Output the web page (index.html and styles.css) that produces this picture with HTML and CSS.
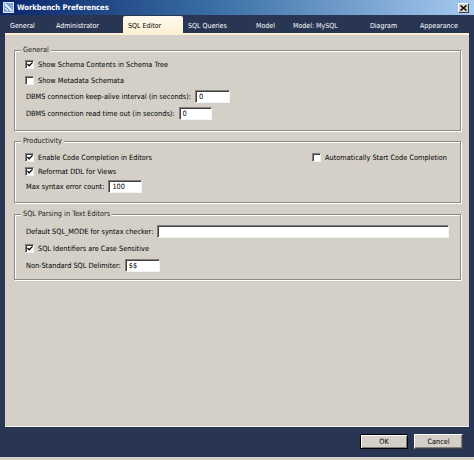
FILE: index.html
```html
<!DOCTYPE html>
<html>
<head>
<meta charset="utf-8">
<title>Workbench Preferences</title>
<link rel="stylesheet" href="styles.css">
</head>
<body>
<div class="window">
  <div class="titlebar">
    <svg class="appicon" width="11" height="11" viewBox="0 0 11 11">
      <rect x="0" y="0" width="11" height="11" fill="#7ea6d8"/>
      <rect x="0.5" y="0.5" width="10" height="10" fill="none" stroke="#d8e6f6"/>
      <path d="M2 2 L9 9" stroke="#ffffff" stroke-width="1.6"/>
      <path d="M2 6 L5 9" stroke="#ffffff" stroke-width="1"/>
    </svg>
    <span class="title">Workbench Preferences</span>
    <span class="closebtn">
      <svg width="7" height="6" viewBox="0 0 7 6"><path d="M0.5 0.5 L6.5 5.5 M6.5 0.5 L0.5 5.5" stroke="#000" stroke-width="1.4"/></svg>
    </span>
  </div>
  <div class="tabs">
    <span class="tab">General</span>
    <span class="tab">Administrator</span>
    <span class="tab active">SQL Editor</span>
    <span class="tab">SQL Queries</span>
    <span class="tab">Model</span>
    <span class="tab">Model: MySQL</span>
    <span class="tab">Diagram</span>
    <span class="tab">Appearance</span>
  </div>
  <div class="panel">
    <fieldset class="group g-general">
      <legend>General</legend>
      <div class="row cbrow"><span class="cb checked"><svg width="7" height="7" viewBox="0 0 7 7"><path d="M0.5 3 L2.5 5 L6.5 1" fill="none" stroke="#000" stroke-width="1.5"/></svg></span><span>Show Schema Contents in Schema Tree</span></div>
      <div class="row cbrow"><span class="cb"></span><span>Show Metadata Schemata</span></div>
      <div class="row inrow"><span class="lbl">DBMS connection keep-alive interval (in seconds):</span><span class="input w-keep">0</span></div>
      <div class="row inrow"><span class="lbl">DBMS connection read time out (in seconds):</span><span class="input w-read">0</span></div>
    </fieldset>
    <fieldset class="group g-prod">
      <legend>Productivity</legend>
      <div class="row cbrow split">
        <span class="pair"><span class="cb checked"><svg width="7" height="7" viewBox="0 0 7 7"><path d="M0.5 3 L2.5 5 L6.5 1" fill="none" stroke="#000" stroke-width="1.5"/></svg></span><span>Enable Code Completion in Editors</span></span>
        <span class="pair right"><span class="cb"></span><span>Automatically Start Code Completion</span></span>
      </div>
      <div class="row cbrow"><span class="cb checked"><svg width="7" height="7" viewBox="0 0 7 7"><path d="M0.5 3 L2.5 5 L6.5 1" fill="none" stroke="#000" stroke-width="1.5"/></svg></span><span>Reformat DDL for Views</span></div>
      <div class="row inrow"><span class="lbl">Max syntax error count:</span><span class="input w-max">100</span></div>
    </fieldset>
    <fieldset class="group g-sql">
      <legend>SQL Parsing in Text Editors</legend>
      <div class="row inrow"><span class="lbl">Default SQL_MODE for syntax checker:</span><span class="input w-mode"></span></div>
      <div class="row cbrow"><span class="cb checked"><svg width="7" height="7" viewBox="0 0 7 7"><path d="M0.5 3 L2.5 5 L6.5 1" fill="none" stroke="#000" stroke-width="1.5"/></svg></span><span>SQL Identifiers are Case Sensitive</span></div>
      <div class="row inrow last"><span class="lbl">Non-Standard SQL Delimiter:</span><span class="input w-delim">$$</span></div>
    </fieldset>
  </div>
  <div class="footer">
    <span class="btn default">OK</span>
    <span class="btn">Cancel</span>
  </div>
</div>
</body>
</html>
```
FILE: styles.css
```css
html, body {
  margin: 0;
  padding: 0;
}
body {
  background: #d4d0c8;
  width: 474px;
  height: 460px;
  overflow: hidden;
  font-family: "DejaVu Sans Condensed", "DejaVu Sans", sans-serif;
  font-size: 7.3px;
  color: #000;
}
.window {
  width: 474px;
  height: 457px;
  background: #283654;
  display: flex;
  flex-direction: column;
}
.titlebar {
  height: 15px;
  flex: none;
  background: linear-gradient(to right, #0a246a 0%, #3a6ea5 45%, #a6caf0 100%);
  display: flex;
  align-items: center;
  padding-left: 3px;
  box-sizing: border-box;
}
.appicon {
  flex: none;
  display: block;
}
.title {
  margin-left: 3px;
  color: #fff;
  font-weight: bold;
  font-size: 7.6px;
  flex: 1;
}
.closebtn {
  width: 11px;
  height: 10px;
  margin-right: 5px;
  background: #d4d0c8;
  box-sizing: border-box;
  border: 1px solid;
  border-color: #fff #404040 #404040 #fff;
  display: flex;
  align-items: center;
  justify-content: center;
}
.closebtn svg { display: block; }
.tabs {
  height: 18px;
  flex: none;
  display: flex;
  align-items: flex-end;
  padding-left: 5px;
}
.tab {
  height: 15px;
  box-sizing: border-box;
  padding-left: 5px;
  color: #fff;
  display: flex;
  align-items: center;
  flex: none;
  white-space: nowrap;
  font-size: 7px;
}
.tab:nth-child(1) { width: 46px; }
.tab:nth-child(2) { width: 72px; }
.tab:nth-child(3) { width: 60px; }
.tab:nth-child(4) { width: 68px; }
.tab:nth-child(5) { width: 37px; }
.tab:nth-child(6) { width: 77px; }
.tab:nth-child(7) { width: 50px; }
.tab:nth-child(8) { width: 54px; }
.tab.active {
  color: #000;
  height: 17px;
  background: linear-gradient(to bottom, #fffbf0, #fdf0d2);
  border-radius: 2px 2px 0 0;
  padding-top: 2px;
}
.panel {
  flex: 1;
  margin: 0 5px;
  background: #d4d0c8;
  border-top: 2px solid #fdf0d2;
  border-bottom: 1px solid #f4f2ee;
  padding-top: 10px;
  display: flex;
  flex-direction: column;
}
.group {
  margin: 0 8px 0 9px;
  border: 1px solid #8c8982;
  box-shadow: inset 1px 1px 0 #fff, 1px 1px 0 #fff;
  padding: 0 0 0 10px;
}
.group legend {
  padding: 0 2px;
  margin-left: -4px;
  background: #d4d0c8;
  line-height: 10px;
  height: 10px;
  color: #222;
}
.g-general { padding-top: 1px; padding-bottom: 8px; }
.g-prod { padding-top: 4px; padding-bottom: 8px; margin-top: 5px; }
.g-sql { padding-top: 4px; padding-bottom: 5px; margin-top: 6px; }
.row {
  display: flex;
  align-items: center;
  white-space: nowrap;
}
.cbrow { height: 16px; }
.inrow { height: 17px; }
.g-prod .cbrow { height: 14px; }
.g-prod .inrow { height: 16px; }
.g-sql .cbrow { height: 16px; }
.g-sql .inrow.last { height: 18px; }
.cb {
  width: 9px;
  height: 9px;
  box-sizing: border-box;
  background: #fff;
  border: 1px solid;
  border-color: #808080 #f0f0f0 #f0f0f0 #808080;
  box-shadow: inset 1px 1px 0 #404040;
  margin-right: 4px;
  flex: none;
  display: flex;
  align-items: center;
  justify-content: center;
}
.cb svg { display: block; margin-left: 1px; margin-top: 1px; }
.split { justify-content: space-between; padding-right: 13px; }
.pair { display: flex; align-items: center; }
.lbl { margin-left: 1px; margin-right: 4px; }
.input {
  height: 13px;
  box-sizing: border-box;
  background: #fff;
  border: 1px solid;
  border-color: #808080 #f4f4f4 #f4f4f4 #808080;
  box-shadow: inset 1px 1px 0 #404040;
  padding-left: 3px;
  line-height: 11px;
  flex: none;
}
.w-keep { width: 35px; }
.w-read { width: 33px; }
.w-max { width: 34px; }
.w-mode { width: 292px; }
.w-delim { width: 35px; }
.footer {
  height: 30px;
  flex: none;
  display: flex;
  justify-content: flex-end;
  align-items: flex-start;
  padding-top: 7px;
  padding-right: 11px;
  box-sizing: border-box;
  gap: 6px;
}
.btn {
  height: 15px;
  box-sizing: border-box;
  background: #d4d0c8;
  border: 1px solid;
  border-color: #fff #404040 #404040 #fff;
  box-shadow: inset -1px -1px 0 #808080;
  display: flex;
  align-items: center;
  justify-content: center;
  width: 49px;
}
.btn.default {
  width: 48px;
  border-color: #000;
  box-shadow: inset 1px 1px 0 #fff, inset -1px -1px 0 #808080;
}
```
